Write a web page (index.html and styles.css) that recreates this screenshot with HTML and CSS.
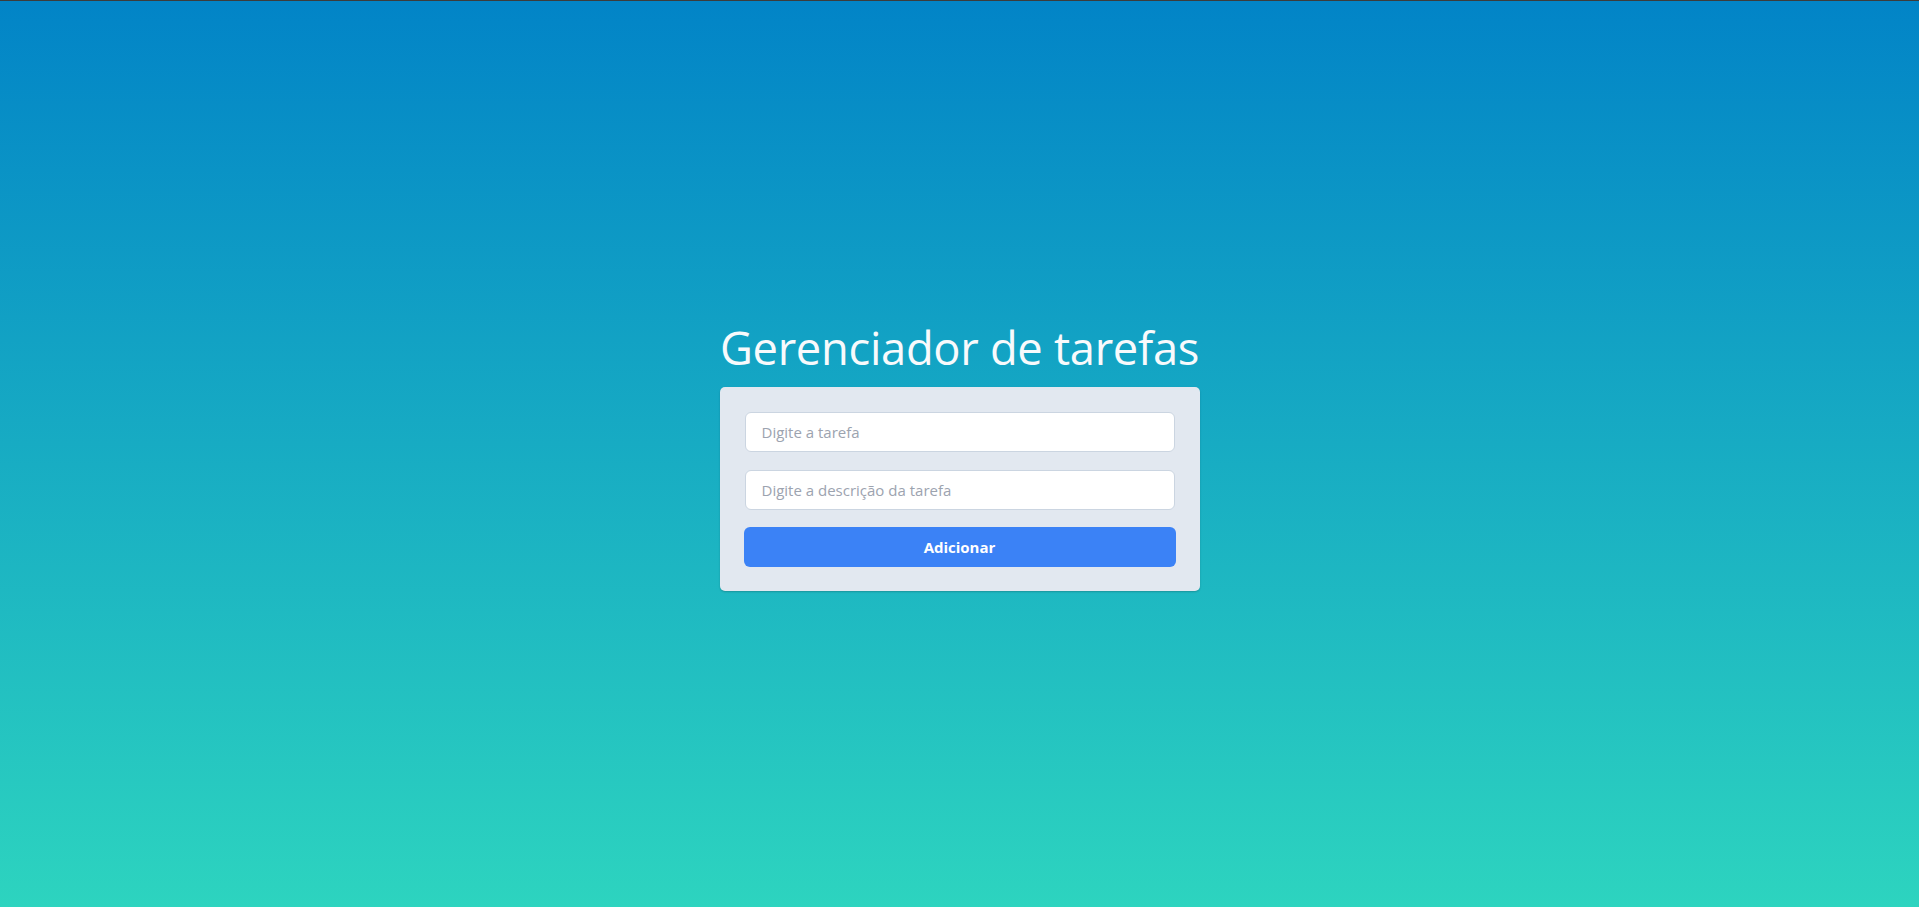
FILE: index.html
```html
<!DOCTYPE html>
<html lang="pt-BR">
<head>
<meta charset="utf-8">
<title>Gerenciador de tarefas</title>
<link rel="stylesheet" href="styles.css">
</head>
<body>
<main class="page">
  <h1 class="title">Gerenciador de tarefas</h1>
  <form class="card">
    <input class="field field-first" type="text" placeholder="Digite a tarefa">
    <input class="field field-second" type="text" placeholder="Digite a descrição da tarefa">
    <button class="btn" type="button">Adicionar</button>
  </form>
</main>
</body>
</html>
```
FILE: styles.css
```css
* { box-sizing: border-box; }
html, body { margin: 0; padding: 0; height: 100%; }
body {
  font-family: "Open Sans", "Noto Sans", sans-serif;
  border-top: 1px solid #3c3c3c;
  background: linear-gradient(to bottom, #0284c7, #2dd4bf);
  min-height: 100vh;
}
.page {
  min-height: 906px;
  display: flex;
  flex-direction: column;
  align-items: center;
  justify-content: center;
  padding-bottom: 1px;
}
.title {
  margin: 0 0 7px;
  font-size: 45.3px;
  line-height: 64px;
  font-weight: 400;
  color: #f8fafc;
  letter-spacing: -0.3px;
}
.card {
  width: 480px;
  background: #e2e8f0;
  border-radius: 5px;
  padding: 25px 24px 24px 25px;
  box-shadow: 0 1px 2px rgba(0,0,0,0.2);
  display: flex;
  flex-direction: column;
}
.field {
  height: 40px;
  width: 430px;
  border: 1px solid #cbd5e1;
  border-radius: 6px;
  background: #fff;
  padding: 0 16px;
  font-family: inherit;
  font-size: 15px;
  color: #334155;
  outline: none;
}
.field::placeholder { color: #9ca3af; }
.field-first { margin-bottom: 18px; }
.field-second { margin-bottom: 17px; }
.btn {
  height: 40px;
  width: 432px;
  margin-left: -1px;
  border: none;
  border-radius: 6px;
  background: #3b82f6;
  color: #fff;
  font-family: inherit;
  font-weight: 700;
  font-size: 15px;
  cursor: pointer;
}
```
